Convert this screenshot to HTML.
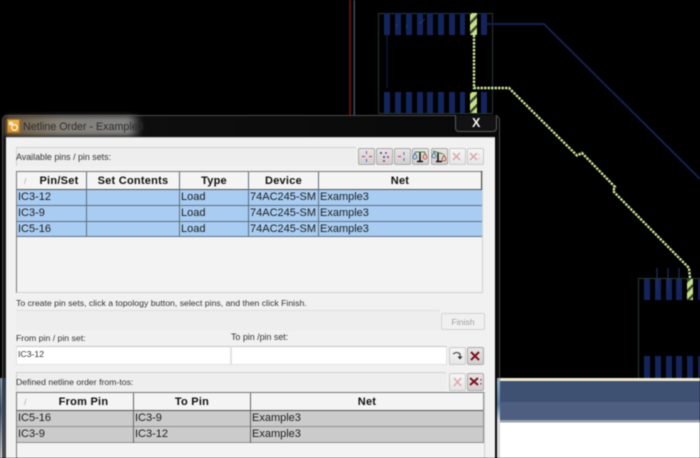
<!DOCTYPE html>
<html><head><meta charset="utf-8"><style>
html,body{margin:0;padding:0;background:#000}
#r{position:relative;width:700px;height:458px;overflow:hidden;background:#000;font-family:"Liberation Sans",sans-serif;filter:blur(.4px)}
#r div,#r span{position:absolute;box-sizing:border-box}
.t{white-space:nowrap;font-size:11px;line-height:14px;color:#1c1c1c}
.h{white-space:nowrap;font-size:11px;line-height:14px;font-weight:bold;color:#111;letter-spacing:.25px;text-align:center}
.s{white-space:nowrap;font-size:8.7px;line-height:12px;color:#333}
.b{background:linear-gradient(#f6f6f6,#e6e6e6);border:1px solid #c9c9c9;border-radius:2px}
.b.d{background:linear-gradient(#e8e4e4,#d2cece);border-color:#a9a9a9}
.l{background:#5d6d80}
.g{background:#8f8f8f}
</style></head><body><div id="r">
<svg style="position:absolute;left:0;top:0" width="700" height="458" viewBox="0 0 700 458">
<defs><pattern id="st" width="7" height="7" patternUnits="userSpaceOnUse" patternTransform="rotate(-45)"><rect width="7" height="7" fill="#3a4a2c"/><rect width="7" height="4.500" fill="#c6e08c"/></pattern></defs>
<rect x="349" y="0" width="2" height="118" fill="#5b1212"/>
<rect x="353.500" y="0" width="1.500" height="118" fill="#3e4c66"/>
<rect x="378.500" y="13.500" width="114" height="100" fill="none" stroke="#263735"/>
<g fill="#13255c">
<rect x="384" y="13" width="6" height="22"/><rect x="395" y="13" width="6" height="22"/><rect x="406" y="13" width="6" height="22"/><rect x="417" y="13" width="6" height="22"/><rect x="427" y="13" width="6" height="22"/><rect x="438" y="13" width="6" height="22"/><rect x="449" y="13" width="6" height="22"/><rect x="460" y="13" width="5" height="22"/><rect x="481" y="13" width="6" height="22"/>
<rect x="384" y="92" width="6" height="21"/><rect x="395" y="92" width="6" height="21"/><rect x="406" y="92" width="6" height="21"/><rect x="417" y="92" width="6" height="21"/><rect x="427" y="92" width="6" height="21"/><rect x="438" y="92" width="6" height="21"/><rect x="449" y="92" width="6" height="21"/><rect x="460" y="92" width="5" height="21"/><rect x="481" y="92" width="6" height="21"/>
<rect x="644" y="278" width="6" height="22"/><rect x="655" y="278" width="6" height="22"/><rect x="666" y="278" width="6" height="22"/><rect x="676" y="278" width="6" height="22"/><rect x="698" y="278" width="2" height="22"/>
<rect x="644" y="356" width="6" height="22"/><rect x="655" y="356" width="6" height="22"/><rect x="666" y="356" width="6" height="22"/><rect x="676" y="356" width="6" height="22"/><rect x="687" y="356" width="6" height="22"/><rect x="698" y="356" width="2" height="22"/>
</g>
<path d="M484 24H544L700 179" fill="none" stroke="#12214f" stroke-width="2"/>
<path d="M387 35V88" fill="none" stroke="#10214e" stroke-width="1"/>
<path d="M396 27l1-3M406 28l1-3M419 24l6-5" fill="none" stroke="#2f477c" stroke-width=".8"/>
<path d="M657 290V268M668 290V268M679 290V268" fill="none" stroke="#1d2f60" stroke-width="1.500" opacity=".8"/>
<rect x="470" y="13" width="7" height="22" fill="url(#st)"/>
<rect x="470" y="92" width="7" height="21" fill="url(#st)"/>
<rect x="687" y="278" width="6" height="22" fill="url(#st)"/>
<path d="M474 35V88H509L577 155.500L582 153L615 187L613 191L689 268L690 278" fill="none" stroke="#c9e296" stroke-width="2.400" stroke-dasharray="2.500 1"/>
<path d="M638.500 278V378M638 278.500H700" stroke="#263735" fill="none"/>
<rect x="490" y="378" width="210" height="80" fill="#fff"/>
<rect x="490" y="378" width="210" height="3" fill="#efe7cf"/>
<rect x="490" y="381" width="210" height="21" fill="#3e5173"/>
<rect x="490" y="402" width="210" height="18" fill="#4d5e81"/>
<rect x="490" y="420" width="210" height="2.500" fill="#9aa2ad"/>
</svg>

<!-- window frame -->
<div style="left:0;top:378px;width:3px;height:80px;background:linear-gradient(#8fa3bb,#48617f 40%,#d5dbe2)"></div>
<div style="left:2px;top:115px;width:498px;height:343px;background:linear-gradient(90deg,#181818,#0e0e0e 30%,#090909);border:1px solid #4a4a4a;border-bottom:0;border-radius:5px 5px 0 0"></div>
<div style="left:497px;top:378px;width:3px;height:44px;background:linear-gradient(#97aec7,#5d7ea3 60%,#dbe4ee)"></div>
<div style="left:497px;top:422px;width:3px;height:36px;background:#d8d8d8"></div>
<div style="left:3px;top:378px;width:3px;height:80px;background:linear-gradient(#2a3a50,#4a4a4a)"></div>
<div style="left:5px;top:116px;width:137px;height:20px;background:linear-gradient(90deg,rgba(170,135,90,.6),rgba(160,155,145,.8) 40%,rgba(160,160,160,.8) 90%,rgba(80,80,80,0));border-radius:3px;filter:blur(2.500px)"></div>
<div style="left:7px;top:119px;width:13px;height:14px;background:linear-gradient(#f1b74e,#d98f22);border:1px solid #a97520"></div>
<svg style="position:absolute;left:8px;top:121px" width="11" height="11" viewBox="0 0 11 11"><path d="M1 1h4v3H1z" fill="#fff2cc"/><circle cx="6.500" cy="6.500" r="2.800" fill="none" stroke="#fff4d8" stroke-width="1.300"/></svg>
<div class="t" style="left:23px;top:120px;font-size:10.700px;color:#2e2e2e">Netline Order - Example3</div>
<div style="left:455px;top:115px;width:42px;height:17px;border:1px solid #5a5a5a;border-top:0;border-radius:0 0 4px 4px;background:#121212"></div>
<div style="left:472px;top:116px;font-size:12.500px;line-height:14px;font-weight:bold;color:#f2f2f2;white-space:nowrap">X</div>

<!-- client -->
<div style="left:6px;top:137px;width:489px;height:321px;background:#f1f1f1;border-top:1px solid #c9c9c9"></div>

<!-- group 1 -->
<div style="left:16px;top:147px;width:340px;height:19px;background:#eeeeee;border-top:1px solid #d2d2d2;border-left:1px solid #d2d2d2"></div>
<div class="s" style="left:16px;top:151px;font-size:8.900px">Available pins / pin sets:</div>

<!-- toolbar -->
<div class="b d" style="left:358px;top:148px;width:17px;height:17px"></div>
<div class="b d" style="left:376px;top:148px;width:17px;height:17px"></div>
<div class="b d" style="left:394px;top:148px;width:17px;height:17px"></div>
<div class="b d" style="left:412px;top:148px;width:17px;height:17px"></div>
<div class="b d" style="left:431px;top:148px;width:17px;height:17px"></div>
<div class="b" style="left:449px;top:148px;width:17px;height:17px"></div>
<div class="b" style="left:467px;top:148px;width:17px;height:17px"></div>
<svg style="position:absolute;left:358px;top:148px" width="126" height="17" viewBox="0 0 126 17">
<g fill="none" stroke-width="1">
<path d="M4 8.500h3M11 8.500h3" stroke="#b53a6a"/><path d="M8.500 3v3M8.500 11v3" stroke="#6a5bb0"/>
<circle cx="23" cy="5" r="1" fill="#3b3f9a"/><circle cx="28" cy="5" r="1" fill="#9b3a8a"/><circle cx="26" cy="9" r="1" fill="#3b3f9a"/><circle cx="30" cy="9" r="1" fill="#9b3a8a"/><circle cx="26" cy="13" r="1" fill="#8a3a8a"/>
<path d="M40 8.500h3" stroke="#b53a6a"/><path d="M46 4v3M46 10v3" stroke="#5a6ab0"/>
<path d="M62 4v9M59 13.500h6" stroke="#111" stroke-width="1.500"/><path d="M57 4h10" stroke="#3c8c3c"/><path d="M55 9l2-4 2 4a2 2 0 0 1-4 0z" stroke="#4a7a9a"/><path d="M65 9l2-4 2 4a2 2 0 0 1-4 0z" stroke="#b06040"/>
<path d="M80 5v8M78 13.500h6" stroke="#111" stroke-width="1.500"/><path d="M75 3l10 3" stroke="#3c8c3c"/><path d="M74 8l2-4 2 4a2 2 0 0 1-4 0z" stroke="#4a7a9a"/><path d="M84 11l2-4 2 4a2 2 0 0 1-4 0z" stroke="#b06040"/>
<path d="M95 5l7 7M102 5l-7 7" stroke="#d9a8a8" stroke-width="1.500"/>
<path d="M112 5l7 7M119 5l-7 7" stroke="#d9a8a8" stroke-width="1.500"/><path d="M121 6v1M121 10v1" stroke="#d9a8a8"/>
</g></svg>

<!-- table 1 -->
<div style="left:16px;top:171px;width:467px;height:122px;background:#f3f3f3;border:1px solid #7a7a7a;border-bottom:1px solid #d0d0d0;border-right:1px solid #cfcfcf"></div>
<div style="left:17px;top:172px;width:465px;height:18px;background:#f4f4f4;border-bottom:1px solid #555"></div>
<div style="left:17px;top:190px;width:465px;height:47px;background:#a9cdf2"></div>
<div style="left:481px;top:171px;width:1px;height:19px;background:#444"></div>
<div class="l" style="left:17px;top:205px;width:465px;height:1px"></div>
<div class="l" style="left:17px;top:221px;width:465px;height:1px"></div>
<div class="l" style="left:17px;top:236px;width:465px;height:1px"></div>
<div class="l" style="left:86px;top:172px;width:1px;height:65px"></div>
<div class="l" style="left:179px;top:172px;width:1px;height:65px"></div>
<div class="l" style="left:248px;top:172px;width:1px;height:65px"></div>
<div class="l" style="left:318px;top:172px;width:1px;height:65px"></div>
<div class="s" style="left:24px;top:175px;color:#aaa">/</div>
<div class="h" style="left:36px;top:174px;width:46px">Pin/Set</div>
<div class="h" style="left:87px;top:174px;width:92px">Set Contents</div>
<div class="h" style="left:180px;top:174px;width:68px">Type</div>
<div class="h" style="left:249px;top:174px;width:69px">Device</div>
<div class="h" style="left:319px;top:174px;width:162px">Net</div>
<div class="t" style="left:18px;top:190px">IC3-12</div><div class="t" style="left:181px;top:190px">Load</div><div class="t" style="left:250px;top:190px">74AC245-SM</div><div class="t" style="left:320px;top:190px">Example3</div>
<div class="t" style="left:18px;top:206px">IC3-9</div><div class="t" style="left:181px;top:206px">Load</div><div class="t" style="left:250px;top:206px">74AC245-SM</div><div class="t" style="left:320px;top:206px">Example3</div>
<div class="t" style="left:18px;top:222px">IC5-16</div><div class="t" style="left:181px;top:222px">Load</div><div class="t" style="left:250px;top:222px">74AC245-SM</div><div class="t" style="left:320px;top:222px">Example3</div>

<!-- middle -->
<div class="s" style="left:16px;top:297px">To create pin sets, click a topology button, select pins, and then click Finish.</div>
<div style="left:16px;top:310px;width:424px;height:20px;background:#eeeeee;border-top:1px solid #dedede"></div>
<div class="b" style="left:441px;top:313px;width:44px;height:17px;background:#f0f0f0;border-color:#d2d2d2"></div>
<div class="s" style="left:441px;top:316px;width:44px;text-align:center;color:#a0a0a0">Finish</div>
<div class="s" style="left:16px;top:332px">From pin / pin set:</div>
<div class="s" style="left:231px;top:331px;font-size:8.900px">To pin /pin set:</div>
<div style="left:16px;top:346px;width:215px;height:19px;background:#fff;border:1px solid #e2e2e2;border-top-color:#c6c6c6"></div>
<div style="left:231px;top:346px;width:216px;height:19px;background:#fff;border:1px solid #e2e2e2;border-top-color:#c6c6c6"></div>
<div class="s" style="left:18px;top:348px">IC3-12</div>

<div class="b" style="left:449px;top:347px;width:17px;height:18px"></div>
<div class="b d" style="left:467px;top:347px;width:17px;height:18px"></div>
<div class="b" style="left:449px;top:373px;width:17px;height:18px"></div>
<div class="b d" style="left:467px;top:373px;width:17px;height:18px"></div>
<svg style="position:absolute;left:449px;top:347px" width="35" height="44" viewBox="0 0 35 44">
<path d="M4 7q4-3 7 0v4" fill="none" stroke="#555" stroke-width="1.300"/><path d="M8.500 9.500h5l-2.500 3z" fill="#333"/>
<path d="M22 5l8 8M30 5l-8 8" stroke="#7a1420" stroke-width="2" fill="none"/>
<path d="M5 31l7 8M12 31l-7 8" stroke="#dba9a9" stroke-width="1.500" fill="none"/>
<path d="M21 31l8 7M29 31l-8 7" stroke="#7a1420" stroke-width="2" fill="none"/><path d="M32 32v1.500M32 36v1.500" stroke="#7a1420" fill="none"/>
</svg>

<!-- group 2 -->
<div style="left:16px;top:372px;width:430px;height:20px;background:#eeeeee;border-top:1px solid #cfcfcf;border-left:1px solid #d2d2d2"></div>
<div class="s" style="left:16px;top:376px">Defined netline order from-tos:</div>

<!-- table 2 -->
<div style="left:16px;top:392px;width:469px;height:66px;background:#f3f3f3;border:1px solid #7a7a7a;border-bottom:0;border-right-color:#cfcfcf"></div>
<div style="left:17px;top:393px;width:467px;height:18px;background:#f4f4f4;border-bottom:1px solid #555"></div>
<div style="left:17px;top:411px;width:467px;height:32px;background:#cbcbcb"></div>
<div class="g" style="left:483px;top:392px;width:1px;height:51px"></div>
<div class="g" style="left:17px;top:426px;width:467px;height:1px"></div>
<div class="g" style="left:17px;top:442px;width:467px;height:1px"></div>
<div style="left:133px;top:393px;width:1px;height:50px;background:#666"></div>
<div style="left:250px;top:393px;width:1px;height:50px;background:#666"></div>
<div class="s" style="left:24px;top:396px;color:#aaa">/</div>
<div class="h" style="left:34px;top:395px;width:99px">From Pin</div>
<div class="h" style="left:134px;top:395px;width:116px">To Pin</div>
<div class="h" style="left:251px;top:395px;width:232px">Net</div>
<div class="t" style="left:18px;top:411px">IC5-16</div><div class="t" style="left:135px;top:411px">IC3-9</div><div class="t" style="left:252px;top:411px">Example3</div>
<div class="t" style="left:18px;top:427px">IC3-9</div><div class="t" style="left:135px;top:427px">IC3-12</div><div class="t" style="left:252px;top:427px">Example3</div>
</div></body></html>
